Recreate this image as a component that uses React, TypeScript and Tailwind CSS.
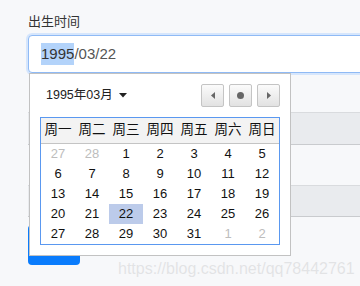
import React from "react";

const weeks = ["周一", "周二", "周三", "周四", "周五", "周六", "周日"];
type Day = { d: number; other?: boolean; sel?: boolean };
const rows: Day[][] = [
  [{ d: 27, other: true }, { d: 28, other: true }, { d: 1 }, { d: 2 }, { d: 3 }, { d: 4 }, { d: 5 }],
  [{ d: 6 }, { d: 7 }, { d: 8 }, { d: 9 }, { d: 10 }, { d: 11 }, { d: 12 }],
  [{ d: 13 }, { d: 14 }, { d: 15 }, { d: 16 }, { d: 17 }, { d: 18 }, { d: 19 }],
  [{ d: 20 }, { d: 21 }, { d: 22, sel: true }, { d: 23 }, { d: 24 }, { d: 25 }, { d: 26 }],
  [{ d: 27 }, { d: 28 }, { d: 29 }, { d: 30 }, { d: 31 }, { d: 1, other: true }, { d: 2, other: true }],
];

const font = { fontFamily: '"Liberation Sans", Arial, "Noto Sans CJK SC", sans-serif' };

function NavBtn({ children }: { children: React.ReactNode }) {
  return (
    <div className="w-[23px] h-[23px] rounded-[2px] border border-[#c4c4c4] bg-gradient-to-b from-[#fbfbfb] to-[#e2e2e2] flex items-center justify-center">
      {children}
    </div>
  );
}

export default function App() {
  return (
    <div className="relative w-[360px] h-[286px] overflow-hidden bg-[#f7f8fa]" style={font}>
      <div className="pl-[28px] pt-[13px]">
        <div className="text-[13px] leading-[18px] text-[#333] mb-[4px]">出生时间</div>
        <div className="relative">
          <div className="h-[38px] w-[360px] bg-white border border-[#8fbaf5] rounded-[4px] shadow-[0_0_0_2px_#d6e6fc] flex items-center pl-[12px] text-[15px] text-[#555]">
            <span className="bg-[#b3d3fa] text-[#333] leading-[22px]">1995</span>
            <span className="leading-[22px]">/03/22</span>
          </div>
          {/* form content behind */}
          <div className="pt-[39px]">
            <div className="h-[33px] bg-[#e9ebee] border-t border-[#d9dbde] border-b border-b-[#c9cbce]" />
            <div className="h-[40px]" />
            <div className="h-[32px] bg-[#e9ebee] border-t border-[#d9dbde] border-b border-b-[#c9cbce]" />
            <div className="h-[8px]" />
            <div className="w-[52px] h-[40px] bg-[#0a7cfc] rounded-[4px]" />
          </div>
          {/* popup */}
          <div className="absolute left-[1px] top-[38px] w-[262px] bg-white border border-[#c2c2c2] px-[10px] pt-[10px] pb-[10px]">
            <div className="flex items-center justify-between h-[23px] mb-[10px]">
              <div className="flex items-center pl-[6px] text-[12.5px] text-[#222]">
                <span>1995年03月</span>
                <svg width="8" height="5" viewBox="0 0 8 5" className="ml-[6px]">
                  <polygon points="0,0 8,0 4,4.5" fill="#222" />
                </svg>
              </div>
              <div className="flex gap-[5px]">
                <NavBtn>
                  <svg width="4" height="7" viewBox="0 0 4 7">
                    <polygon points="4,0 4,7 0,3.5" fill="#666" />
                  </svg>
                </NavBtn>
                <NavBtn>
                  <div className="w-[7px] h-[7px] rounded-full bg-[#666]" />
                </NavBtn>
                <NavBtn>
                  <svg width="4" height="7" viewBox="0 0 4 7">
                    <polygon points="0,0 0,7 4,3.5" fill="#666" />
                  </svg>
                </NavBtn>
              </div>
            </div>
            <div className="border border-[#5a98f0] w-[240px]">
              <div className="flex h-[26px] bg-[#f3f3f3] border-b border-[#c4c4c4]">
                {weeks.map((w) => (
                  <div key={w} className="w-[34px] flex items-center justify-center text-[13.5px] text-[#111]">
                    {w}
                  </div>
                ))}
              </div>
              {rows.map((r, i) => (
                <div key={i} className="flex h-[20px]">
                  {r.map((c, j) => (
                    <div
                      key={j}
                      className={
                        "w-[34px] flex items-center justify-center text-[13px] " +
                        (c.sel ? "bg-[#bccbea] " : "") +
                        (c.other ? "text-[#bdbdbd]" : "text-[#111]")
                      }
                    >
                      {c.d}
                    </div>
                  ))}
                </div>
              ))}
            </div>
          </div>
        </div>
      </div>
      <div className="absolute left-[118px] top-[259px] text-[16px] leading-[20px] text-[#e2e3e5] [text-shadow:0_0_1px_#ffffff]">
        https://blog.csdn.net/qq78442761
      </div>
    </div>
  );
}
